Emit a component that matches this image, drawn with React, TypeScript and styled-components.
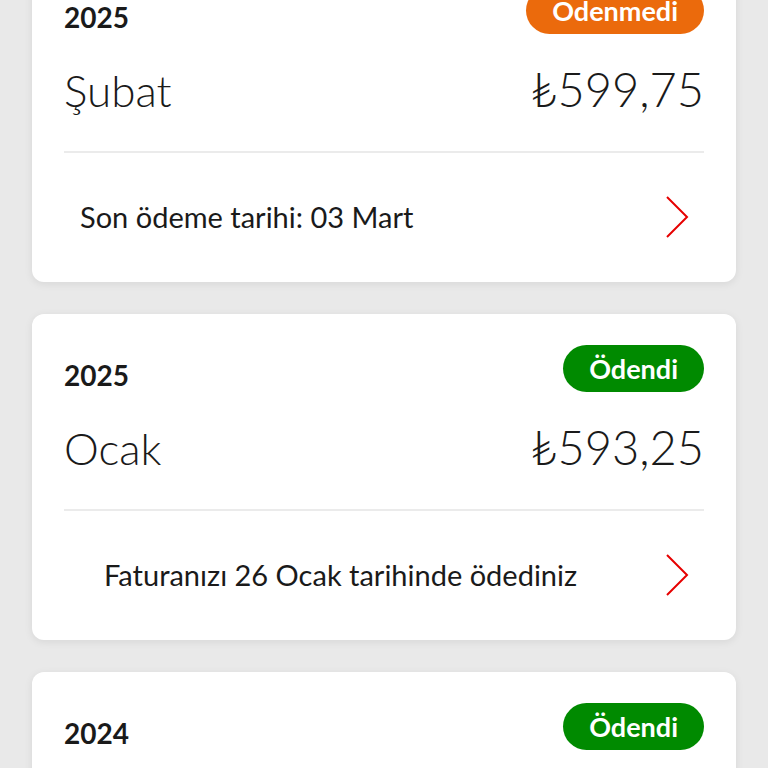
import React from "react";
import styled, { createGlobalStyle } from "styled-components";

const Global = createGlobalStyle`
  html, body { margin: 0; padding: 0; background: #e9e9e9; }
  body { font-family: Lato, "Noto Sans", sans-serif; color: #1a1a1a; overflow: hidden; }
`;

const List = styled.div`
  display: flex;
  flex-direction: column;
  gap: 32px;
  padding: 0 32px;
  margin-top: -44px;
`;

const Card = styled.div`
  background: #fff;
  border-radius: 12px;
  box-shadow: 0 2px 8px rgba(0, 0, 0, 0.08);
  padding: 31px 32px 0;
  height: 326px;
  box-sizing: border-box;
  display: flex;
  flex-direction: column;
`;

const Header = styled.div`
  display: flex;
  justify-content: space-between;
  align-items: center;
  height: 47px;
`;

const Year = styled.div`
  font-weight: 700;
  font-size: 28px;
  padding-top: 12px;
`;

const Badge = styled.div<{ $tone: "paid" | "unpaid" }>`
  height: 47px;
  border-radius: 24px;
  padding: 0 26px;
  display: flex;
  align-items: center;
  color: #fff;
  font-weight: 700;
  font-size: 27px;
  background: ${(p) => (p.$tone === "paid" ? "#008a00" : "#eb6a0c")};
`;

const MainRow = styled.div`
  display: flex;
  justify-content: space-between;
  align-items: baseline;
  height: 119px;
  padding-top: 9px;
  box-sizing: border-box;
  border-bottom: 2px solid #ebebeb;
  font-weight: 300;
  line-height: 92px;
`;

const Month = styled.div`
  font-size: 44px;
`;

const Amount = styled.div`
  font-size: 47px;
`;

const Footer = styled.div<{ $indent: number }>`
  flex: 1;
  display: flex;
  align-items: center;
  justify-content: space-between;
  padding-left: ${(p) => p.$indent}px;
  padding-right: 15px;
  padding-bottom: 2px;
`;

const FooterText = styled.div`
  font-size: 29px;
  font-weight: 400;
`;

const Chevron = () => (
  <svg width="24" height="44" viewBox="0 0 24 44">
    <path d="M2 2 L22 22 L2 42" fill="none" stroke="#e60000" strokeWidth="2" />
  </svg>
);

type Bill = {
  year: string;
  month: string;
  amount: string;
  paid: boolean;
  note?: string;
  indent: number;
};

const bills: Bill[] = [
  { year: "2025", month: "Şubat", amount: "₺599,75", paid: false, note: "Son ödeme tarihi: 03 Mart", indent: 16 },
  { year: "2025", month: "Ocak", amount: "₺593,25", paid: true, note: "Faturanızı 26 Ocak tarihinde ödediniz", indent: 40 },
  { year: "2024", month: "Aralık", amount: "₺593,25", paid: true, note: "Faturanızı 26 Aralık tarihinde ödediniz", indent: 40 },
];

export default function App() {
  return (
    <>
      <Global />
      <List>
        {bills.map((b, i) => (
          <Card key={i}>
            <Header>
              <Year>{b.year}</Year>
              <Badge $tone={b.paid ? "paid" : "unpaid"}>{b.paid ? "Ödendi" : "Ödenmedi"}</Badge>
            </Header>
            <MainRow>
              <Month>{b.month}</Month>
              <Amount>{b.amount}</Amount>
            </MainRow>
            <Footer $indent={b.indent}>
              <FooterText>{b.note}</FooterText>
              <Chevron />
            </Footer>
          </Card>
        ))}
      </List>
    </>
  );
}
